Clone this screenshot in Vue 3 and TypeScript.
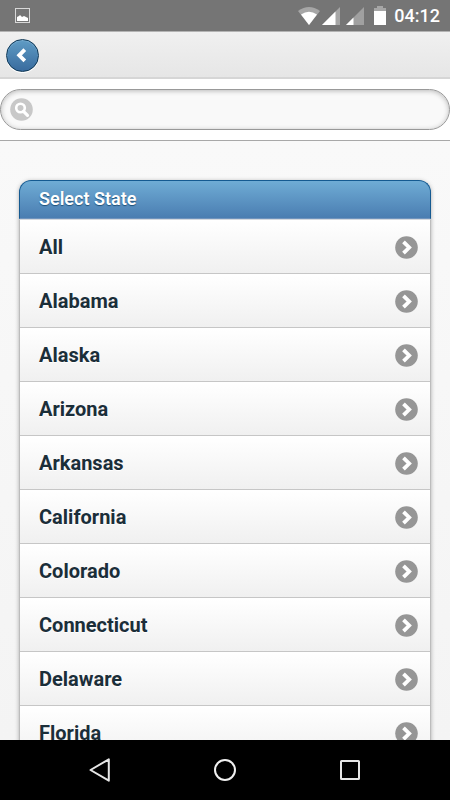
<script setup lang="ts">
import { ref } from 'vue'

const query = ref<string>('')

const states: string[] = [
  'All',
  'Alabama',
  'Alaska',
  'Arizona',
  'Arkansas',
  'California',
  'Colorado',
  'Connecticut',
  'Delaware',
  'Florida',
]
</script>

<template>
  <div class="screen">
    <div class="status-bar">
      <svg class="picture-icon" width="15" height="15" viewBox="0 0 15 15" aria-hidden="true">
        <rect x=".5" y=".5" width="14" height="14" fill="none" stroke="#d8d8d8" />
        <path d="M2 13V9l2-1 1-1 2 2 2-1 2 1 2 1v3z" fill="#fff" />
      </svg>
      <div class="status-icons">
        <svg width="22" height="18" viewBox="0 0 22 18" aria-hidden="true">
          <path d="M0 4Q11-4 22 4L11 18z" fill="#a6a6a6" />
          <path d="M3 7.500Q11 2 19 7.500L11 18z" fill="#fff" />
        </svg>
        <svg width="18" height="18" viewBox="0 0 18 18" aria-hidden="true">
          <path d="M0 18L18 0v18z" fill="#a6a6a6" />
          <path d="M0 18L13.500 4.500V18z" fill="#fff" />
        </svg>
        <svg class="signal-weak" width="18" height="18" viewBox="0 0 18 18" aria-hidden="true">
          <path d="M0 18L18 0v18z" fill="#a0a0a0" />
          <path d="M0 18L7.500 10.500V18z" fill="#fff" />
        </svg>
        <svg class="battery" width="12" height="19" viewBox="0 0 12 19" aria-hidden="true">
          <path d="M3 0h6v2h3v4H0V2h3z" fill="#a6a6a6" />
          <path d="M0 5h12v14H0z" fill="#fff" />
        </svg>
        <span class="clock">04:12</span>
      </div>
    </div>

    <header class="header">
      <button class="back" type="button" aria-label="Back">
        <svg width="31" height="31" viewBox="0 0 31 31" aria-hidden="true">
          <path d="M17.800 9.700L12.200 15.300l5.600 5.600" fill="none" stroke="#fff" stroke-width="3.800" />
        </svg>
      </button>
    </header>

    <form class="search" role="search" @submit.prevent>
      <label class="search-field">
        <svg width="23" height="23" viewBox="0 0 23 23" aria-hidden="true">
          <circle cx="11.500" cy="11.500" r="11.300" fill="#c8c8c8" />
          <circle cx="10.500" cy="10" r="4.300" fill="none" stroke="#fff" stroke-width="2.600" />
          <path d="M13.500 13.300l4 4" stroke="#fff" stroke-width="3.200" stroke-linecap="round" />
        </svg>
        <input v-model="query" type="text" aria-label="Search" />
      </label>
    </form>

    <main class="content">
      <section class="card">
        <h1 class="card-title">Select State</h1>
        <ul class="list">
          <li v-for="state in states" :key="state">
            <a class="row" href="#">
              <span>{{ state }}</span>
              <svg width="23" height="23" viewBox="0 0 23 23" aria-hidden="true">
                <circle cx="11.500" cy="11.500" r="11.300" fill="#969696" />
                <path d="M8.500 5.800l5.700 5.700-5.700 5.700" fill="none" stroke="#fff" stroke-width="3.800" />
              </svg>
            </a>
          </li>
        </ul>
      </section>
    </main>

    <nav class="nav-bar">
      <button type="button" aria-label="Navigate back">
        <svg width="26" height="26" viewBox="0 0 26 26" aria-hidden="true">
          <path d="M21.800 2.300v21.400L3.500 13z" fill="none" stroke="#e6e6e6" stroke-width="2" stroke-linejoin="round" />
        </svg>
      </button>
      <button type="button" aria-label="Home">
        <svg width="26" height="26" viewBox="0 0 26 26" aria-hidden="true">
          <circle cx="13" cy="13" r="10" fill="none" stroke="#f0f0f0" stroke-width="2" />
        </svg>
      </button>
      <button type="button" aria-label="Recent apps">
        <svg width="26" height="26" viewBox="0 0 26 26" aria-hidden="true">
          <rect x="4" y="4" width="18" height="18" rx=".5" fill="none" stroke="#e6e6e6" stroke-width="2" />
        </svg>
      </button>
    </nav>
  </div>
</template>

<style>
body {
  margin: 0;
}
</style>

<style scoped>
* {
  box-sizing: border-box;
}

.screen {
  display: flex;
  flex-direction: column;
  height: 100vh;
  overflow: hidden;
  background: #f8f8f8;
  font-family: Roboto, "Liberation Sans", sans-serif;
}

svg {
  display: block;
  flex: none;
}

.status-bar {
  display: flex;
  flex: none;
  align-items: center;
  justify-content: space-between;
  height: 31px;
  padding: 0 10px 0 15px;
  background: #757575;
  color: #fff;
}

.status-icons {
  display: flex;
  align-items: center;
  gap: 2px;
}

.signal-weak {
  margin-left: 4px;
}

.battery {
  margin: 0 6px 0 8px;
}

.clock {
  font-size: 18px;
  font-weight: 500;
  line-height: 24px;
}

.header {
  display: flex;
  flex: none;
  align-items: center;
  height: 48px;
  padding: 2px 6px 0;
  border-top: 1px solid #b3b3b3;
  border-bottom: 2px solid #d6d6d6;
  background: linear-gradient(#f0f0f0, #e6e6e6);
}

.back {
  width: 33px;
  height: 33px;
  padding: 0;
  border: 1px solid #0c3655;
  border-radius: 50%;
  background: linear-gradient(#5f9cc5, #396b9e);
  box-shadow: inset 0 1px 1px #79acd0, 0 1px 0 #fff;
}

.search {
  flex: none;
  padding: 10px 0;
  border-bottom: 1px solid #a8a8a8;
  background: #fff;
}

.search-field {
  display: flex;
  align-items: center;
  gap: 8px;
  height: 41px;
  padding: 0 16px 0 9px;
  border: 1px solid #999;
  border-radius: 21px;
  background: #f9f9f9;
  box-shadow: inset 0 1px 5px #b8b8b8;
}

.search-field input {
  flex: 1;
  min-width: 0;
  padding: 0;
  border: 0;
  outline: 0;
  background: transparent;
  color: #333;
  font: inherit;
  font-size: 20px;
}

.content {
  flex: 1;
  min-height: 0;
  padding: 39px 19px 0;
  overflow: hidden;
  background: linear-gradient(#f9f9f9, #f4f4f4);
}

.card {
  border-radius: 12px 12px 0 0;
  box-shadow: 0 1px 4px #aaa;
}

.card-title {
  height: 39px;
  margin: 0;
  padding: 0 19px;
  border: 1px solid #155a91;
  border-bottom-color: #6f93bd;
  border-radius: 12px 12px 0 0;
  background: linear-gradient(#6facd5, #4a7db1);
  color: #fff;
  font-size: 18px;
  font-weight: 600;
  line-height: 36px;
  text-shadow: 0 1px 1px #1f5077;
}

.list {
  margin: 0;
  padding: 0;
  border: 1px solid #bcbcbc;
  border-top-color: #d4d8de;
  list-style: none;
}

.row {
  display: flex;
  align-items: center;
  justify-content: space-between;
  height: 54px;
  padding: 0 12px 0 19px;
  border-top: 1px solid #fff;
  border-bottom: 1px solid #c6c6c6;
  background: linear-gradient(#fff, #f0f0f0);
  color: #1b2e39;
  font-size: 20px;
  font-weight: 700;
  text-decoration: none;
  text-shadow: 0 1px 0 #fff;
}

.nav-bar {
  display: grid;
  flex: none;
  grid-template-columns: repeat(3, 125px);
  align-items: center;
  justify-content: center;
  height: 60px;
  background: #000;
}

.nav-bar button {
  justify-self: center;
  padding: 0;
  border: 0;
  background: transparent;
}
</style>
